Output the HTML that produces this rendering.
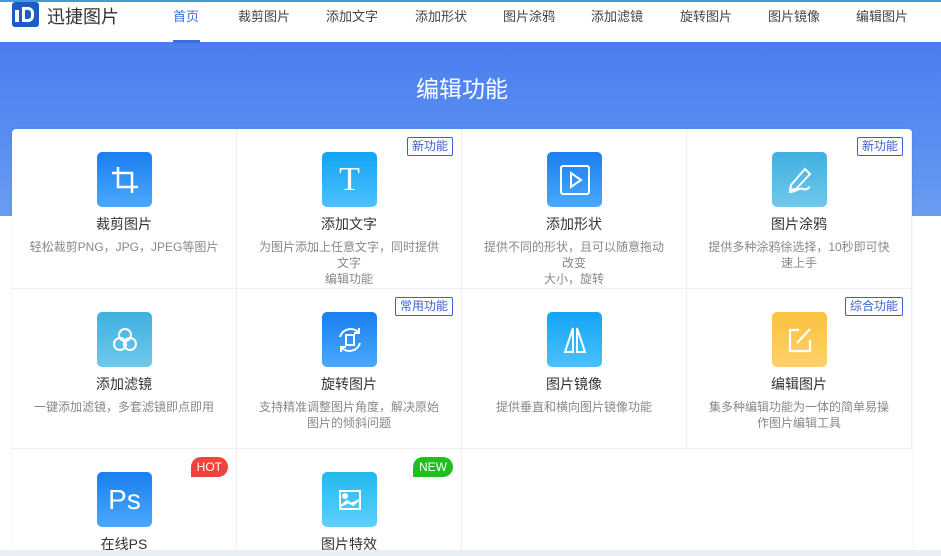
<!DOCTYPE html>
<html><head><meta charset="utf-8"><style>
*{margin:0;padding:0;box-sizing:border-box}
html,body{width:941px;height:556px;overflow:hidden}
body{background:#fff;font-family:"Liberation Sans","Noto Sans CJK SC",sans-serif;position:relative}
.top{position:absolute;left:0;top:0;width:941px;height:2px;background:#3a9fe0}
.hdr{position:absolute;top:0;left:0;width:941px;height:42px;background:#fff}
.logo{position:absolute;left:12px;top:2px;width:27px;height:25px;background:#1f5bc4;border-radius:3px}
.logo span{position:absolute;left:10px;top:5px;width:12px;height:15px;border:3px solid #fff;border-radius:0 6px 6px 0}
.logo i{position:absolute;left:3px;top:8px;width:4px;height:12px;background:#fff}
.brand{position:absolute;left:47px;top:3px;font-size:18px;color:#333}
.nav{position:absolute;top:6px;font-size:13px;color:#444;transform:translateX(-50%);white-space:nowrap}
.ul{position:absolute;left:173px;top:40px;width:27px;height:3px;background:#3b6fe0}
.banner{position:absolute;left:0;top:42px;width:941px;height:174px;background:linear-gradient(180deg,#4a7ef0,#5a8ff2 60%,#6a9cf0)}
.banner h1{position:absolute;left:412px;width:100px;top:28px;text-align:center;color:#fff;font-size:23px;font-weight:normal}
.card{position:absolute;left:12px;top:129px;width:900px;height:421px;background:#fff;border-radius:4px 4px 0 0;box-shadow:0 0 3px rgba(0,0,0,.08);overflow:hidden}
.c{position:absolute;width:225px;height:160px;border-right:1px solid #eceff3;border-bottom:1px solid #eceff3;text-align:center}
.c.b{height:101px;border-bottom:none}
.ic{position:absolute;left:85px;top:23px;width:55px;height:55px;border-radius:5px;display:flex;align-items:center;justify-content:center}
.t{position:absolute;top:85px;width:100%;font-size:14px;color:#333}
.d{position:absolute;top:110px;left:0;right:0;font-size:12px;color:#888;line-height:16px;white-space:nowrap}
.tag{position:absolute;right:8px;top:8px;font-size:12px;color:#3b5fcf;border:1px solid #3b5fcf;padding:0 4px;line-height:17px;border-radius:2px;background:#fff}
.bdg{position:absolute;right:8px;top:8px;color:#fff;font-size:12px;line-height:20px;padding:0 6px;border-radius:10px 10px 10px 0}
.strip{position:absolute;left:0;top:550px;width:941px;height:6px;background:#e9eef5}
</style></head><body>
<div class="banner"><h1>编辑功能</h1></div>
<div class="hdr"></div><div class="top"></div>
<div class="logo"><i></i><span></span></div>
<div class="brand">迅捷图片</div>
<div class="nav" style="left:186px;color:#3b6fe0">首页</div>
<div class="nav" style="left:264px">裁剪图片</div>
<div class="nav" style="left:352px">添加文字</div>
<div class="nav" style="left:441px">添加形状</div>
<div class="nav" style="left:529px">图片涂鸦</div>
<div class="nav" style="left:617px">添加滤镜</div>
<div class="nav" style="left:706px">旋转图片</div>
<div class="nav" style="left:794px">图片镜像</div>
<div class="nav" style="left:882px">编辑图片</div>
<div class="ul"></div>
<div class="card">
<div class="c" style="left:0;top:0"><div class="ic" style="background:linear-gradient(#1a7ff0,#4aa8fb)"><svg width="30" height="30" viewBox="0 0 30 30" fill="none" stroke="#fff" stroke-width="2.5"><path d="M8 2V22H28M2 8H22V28"/></svg></div><div class="t">裁剪图片</div><div class="d">轻松裁剪PNG，JPG，JPEG等图片</div></div>
<div class="c" style="left:225px;top:0"><div class="ic" style="background:linear-gradient(#12a4f5,#4cc0fc)"><span style="color:#fff;font-family:'Liberation Serif',serif;font-size:34px">T</span></div><div class="t">添加文字</div><div class="d">为图片添加上任意文字，同时提供<br>文字<br>编辑功能</div><div class="tag">新功能</div></div>
<div class="c" style="left:450px;top:0"><div class="ic" style="background:linear-gradient(#1a7ff0,#4aa8fb)"><svg width="30" height="30" viewBox="0 0 30 30" fill="none" stroke="#fff" stroke-width="2"><rect x="1" y="1" width="28" height="28" rx="2"/><path d="M11 8V22L21 15Z"/></svg></div><div class="t">添加形状</div><div class="d">提供不同的形状，且可以随意拖动<br>改变<br>大小，旋转</div></div>
<div class="c" style="left:675px;top:0"><div class="ic" style="background:linear-gradient(#40b0e0,#70c8ea)"><svg width="30" height="30" viewBox="0 0 30 30" fill="none" stroke="#fff" stroke-width="2"><path d="M6 20L20 4L25 9L11 24L5 25Z M4 27C10 28 14 22 18 24C21 26 24 22 25 22"/></svg></div><div class="t">图片涂鸦</div><div class="d">提供多种涂鸦徐选择，10秒即可快<br>速上手</div><div class="tag">新功能</div></div>
<div class="c" style="left:0;top:160px"><div class="ic" style="background:linear-gradient(#40b0e0,#70c8ea)"><svg width="30" height="30" viewBox="0 0 30 30" fill="none" stroke="#fff" stroke-width="2"><circle cx="15" cy="10" r="6"/><circle cx="10" cy="19" r="6"/><circle cx="20" cy="19" r="6"/></svg></div><div class="t">添加滤镜</div><div class="d">一键添加滤镜，多套滤镜即点即用</div></div>
<div class="c" style="left:225px;top:160px"><div class="ic" style="background:linear-gradient(#1a7ff0,#4aa8fb)"><svg width="30" height="30" viewBox="0 0 30 30" fill="none" stroke="#fff" stroke-width="2"><rect x="11" y="10" width="8" height="10"/><path d="M5 12A11 11 0 0 1 24 8M25 18A11 11 0 0 1 6 22M24 3V8H19M6 27V22H11"/></svg></div><div class="t">旋转图片</div><div class="d">支持精准调整图片角度，解决原始<br>图片的倾斜问题</div><div class="tag">常用功能</div></div>
<div class="c" style="left:450px;top:160px"><div class="ic" style="background:linear-gradient(#12a4f5,#4cc0fc)"><svg width="30" height="30" viewBox="0 0 30 30" fill="none" stroke="#fff" stroke-width="2"><path d="M13 3L5 27H13ZM17 3L25 27H17Z"/></svg></div><div class="t">图片镜像</div><div class="d">提供垂直和横向图片镜像功能</div></div>
<div class="c" style="left:675px;top:160px"><div class="ic" style="background:linear-gradient(#fcc240,#fdd068)"><svg width="30" height="30" viewBox="0 0 30 30" fill="none" stroke="#fff" stroke-width="2.2"><path d="M14 5H5V26H25V15M12 18L25 4"/></svg></div><div class="t">编辑图片</div><div class="d">集多种编辑功能为一体的简单易操<br>作图片编辑工具</div><div class="tag">综合功能</div></div>
<div class="c b" style="left:0;top:320px"><div class="ic" style="background:linear-gradient(#1a7ff0,#4aa8fb)"><span style="color:#fff;font-size:28px">Ps</span></div><div class="t">在线PS</div><div class="bdg" style="background:#f0443a">HOT</div></div>
<div class="c b" style="left:225px;top:320px"><div class="ic" style="background:linear-gradient(#22b8f0,#5ed0fb)"><svg width="34" height="34" viewBox="0 0 34 34" fill="none" stroke="#fff" stroke-width="2"><rect x="7" y="8" width="20" height="18"/><path d="M7 24L14 18L20 22L27 16" fill="#fff"/><circle cx="12" cy="13" r="2" fill="#fff"/></svg></div><div class="t">图片特效</div><div class="bdg" style="background:#1fbf1f">NEW</div></div>
</div>
<div class="strip"></div>
</body></html>
